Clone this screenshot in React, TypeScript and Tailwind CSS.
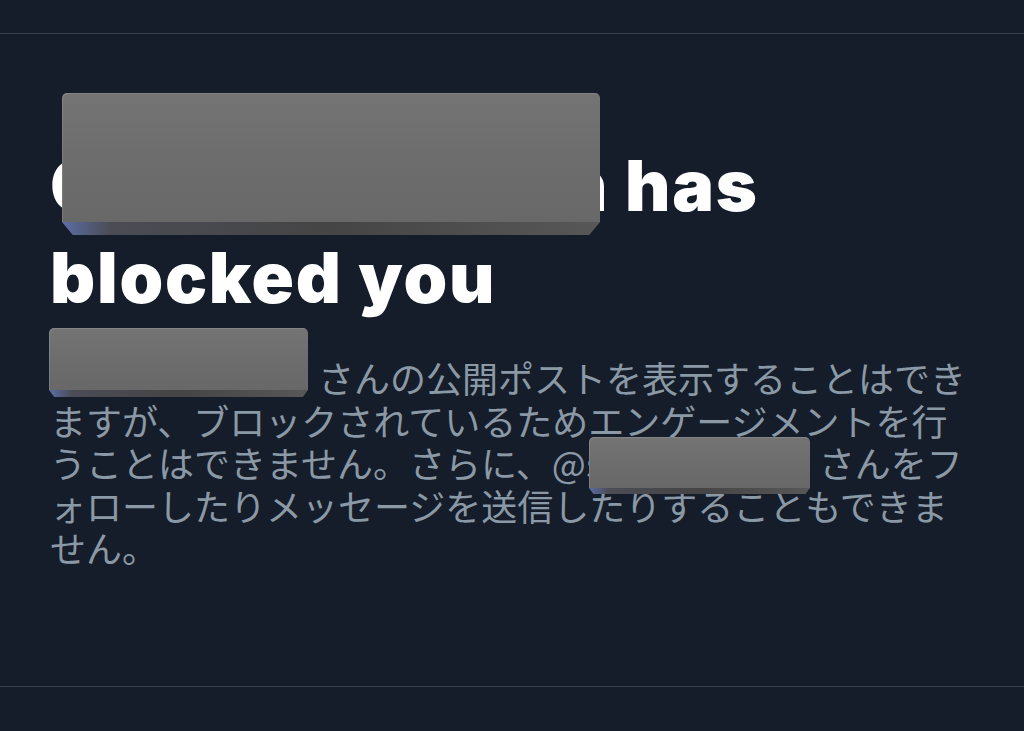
const face = "bg-gradient-to-b from-[#747474] via-[#6d6d6d] to-[#686868]";

function Redaction({ className, strip }: { className: string; strip: string }) {
  return (
    <div className={`pointer-events-none absolute flex flex-col ${className}`}>
      <div className={`flex-1 rounded-t-[5px] ${face} shadow-[inset_1px_1px_0_rgba(255,255,255,0.12)]`} />
      <div
        className={`${strip} bg-[linear-gradient(90deg,#5c6da6_0%,#4b4c55_9%,#454545_50%,#575757_100%)] [clip-path:polygon(0_0,100%_0,98%_100%,2%_100%)]`}
      />
    </div>
  );
}

export default function App() {
  return (
    <div className="min-h-[731px] w-full bg-[#151d2a] font-['Inter',sans-serif]">
      <div className="h-[34px] border-b border-[#38424f]" />

      <section className="h-[653px] border-b border-[#38424f] pl-[50px] pt-[106px]">
        {/* heading */}
        <h1 className="relative whitespace-nowrap text-[70px] font-black leading-[92px] tracking-[0.025em] text-white">
          C<span className="inline-block w-[458px]" />n has
          <br />
          blocked you
          <Redaction className="left-[12px] top-[-47px] h-[142px] w-[538px]" strip="h-[13px]" />
        </h1>

        {/* description */}
        <p className="relative mt-[32px] whitespace-nowrap font-['Noto_Sans_CJK_JP',sans-serif] text-[36px] leading-[42.5px] text-[#8b98a5]">
          <span className="inline-block w-[268px]" />
          さんの公開ポストを表示することはでき
          <br />
          ますが、ブロックされているためエンゲージメントを行
          <br />
          うことはできません。さらに、@s
          <span className="inline-block w-[216px]" />
          さんをフ
          <br />
          ォローしたりメッセージを送信したりすることもできま
          <br />
          せん。
          <Redaction className="left-[-1px] top-[-28px] h-[69px] w-[259px]" strip="h-[7px]" />
          <Redaction className="left-[539px] top-[81px] h-[57px] w-[221px]" strip="h-[6px]" />
        </p>
      </section>
    </div>
  );
}
